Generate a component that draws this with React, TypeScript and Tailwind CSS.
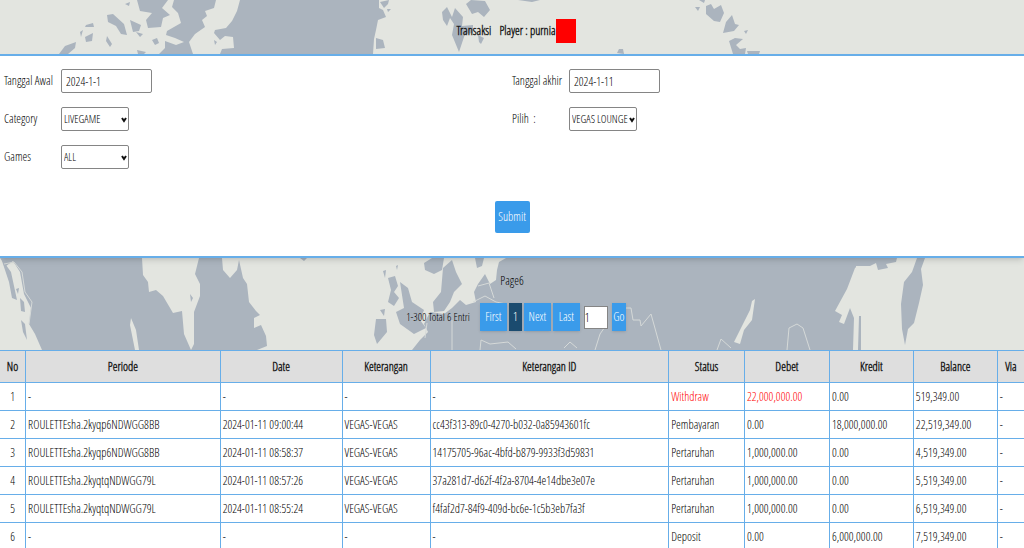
import type { ReactNode } from "react";

// ---------------------------------------------------------------------------
// Data
// ---------------------------------------------------------------------------

interface Transaction {
  periode: string;
  date: string;
  keterangan: string;
  keteranganId: string;
  status: string;
  debet: string;
  kredit: string;
  balance: string;
  via: string;
}

const TRANSACTIONS: Transaction[] = [
  { periode: "-", date: "-", keterangan: "-", keteranganId: "-", status: "Withdraw", debet: "22,000,000.00", kredit: "0.00", balance: "519,349.00", via: "-" },
  { periode: "ROULETTEsha.2kyqp6NDWGG8BB", date: "2024-01-11 09:00:44", keterangan: "VEGAS-VEGAS", keteranganId: "cc43f313-89c0-4270-b032-0a85943601fc", status: "Pembayaran", debet: "0.00", kredit: "18,000,000.00", balance: "22,519,349.00", via: "-" },
  { periode: "ROULETTEsha.2kyqp6NDWGG8BB", date: "2024-01-11 08:58:37", keterangan: "VEGAS-VEGAS", keteranganId: "14175705-96ac-4bfd-b879-9933f3d59831", status: "Pertaruhan", debet: "1,000,000.00", kredit: "0.00", balance: "4,519,349.00", via: "-" },
  { periode: "ROULETTEsha.2kyqtqNDWGG79L", date: "2024-01-11 08:57:26", keterangan: "VEGAS-VEGAS", keteranganId: "37a281d7-d62f-4f2a-8704-4e14dbe3e07e", status: "Pertaruhan", debet: "1,000,000.00", kredit: "0.00", balance: "5,519,349.00", via: "-" },
  { periode: "ROULETTEsha.2kyqtqNDWGG79L", date: "2024-01-11 08:55:24", keterangan: "VEGAS-VEGAS", keteranganId: "f4faf2d7-84f9-409d-bc6e-1c5b3eb7fa3f", status: "Pertaruhan", debet: "1,000,000.00", kredit: "0.00", balance: "6,519,349.00", via: "-" },
  { periode: "-", date: "-", keterangan: "-", keteranganId: "-", status: "Deposit", debet: "0.00", kredit: "6,000,000.00", balance: "7,519,349.00", via: "-" },
];

const COLUMNS: { label: string; width: string }[] = [
  { label: "No", width: "w-[2.5%]" },
  { label: "Periode", width: "w-[19%]" },
  { label: "Date", width: "w-[11.9%]" },
  { label: "Keterangan", width: "w-[8.6%]" },
  { label: "Keterangan ID", width: "w-[23.3%]" },
  { label: "Status", width: "w-[7.4%]" },
  { label: "Debet", width: "w-[8.3%]" },
  { label: "Kredit", width: "w-[8.2%]" },
  { label: "Balance", width: "w-[8.2%]" },
  { label: "Via", width: "w-[2.6%]" },
];

// ---------------------------------------------------------------------------
// Map artwork
// ---------------------------------------------------------------------------

function HeaderMap() {
  return (
    <svg className="absolute inset-0 h-full w-full" viewBox="0 0 1024 54" preserveAspectRatio="none" fill="#abb4be" aria-hidden="true">
      <path d="M59 54 65 46 76 42 75 48 68 54ZM80 32 83 30 81 37ZM86 25 93 23 94 27 85 27ZM85 37 93 33 92 41 86 42ZM107 15 113 14 124 24 127 35 121 34 116 26 108 22ZM107 36 112 44 110 47 106 41ZM125 4 130 2 129 6ZM130 20 141 25 139 31 133 32ZM137 0 168 0 162 8 170 15 163 18 161 27 148 28 146 20 152 13 140 11ZM136 32 143 34 140 37ZM152 40 157 38 159 43 155 45ZM137 50 146 52 144 54 138 54Z" />
      <path d="M174 0H216L214 8 205 11 207 16 202 20 205 27 195 34 189 42 193 54H159L165 48 165 41 176 45 184 42 175 38 166 35 167 31 181 23 178 13 172 7Z" />
      <path d="M240 0H379L379 8 383 10 386 17 378 20 376 30 374 39 373 54H220L222 49 234 48 233 37 225 36 220 40 214 33 215 30 226 28 232 21 237 11ZM376 38 383 40 385 48 376 49ZM380 2 389 0 388 4 384 8ZM387 9 391 9 388 12ZM214 40 217 42 215 45Z" />
      <path d="M442 12 447 7 452 17 455 8 463 17 462 26 473 25 473 33 465 34 459 52 452 35 454 24 450 18 447 26 443 20ZM466 4 471 0 485 1 490 10 484 17 478 12 472 14ZM478 35 484 38 481 44 479 42ZM518 0 540 0 532 2ZM617 53 619 49 623 49 624 54ZM695 7 700 7 698 11ZM699 0 705 0 704 3ZM706 6 711 4 714 9 721 5 724 13 720 22 714 21 706 14ZM732 15 735 24 739 25 734 31 723 33 726 22ZM744 31 748 30 746 34ZM729 41 735 38 743 39 736 45 740 49 746 48 745 54 733 54ZM747 51 760 51 759 54 748 54Z" />
    </svg>
  );
}

function PagerMap() {
  return (
    <svg className="absolute inset-0 h-full w-full" viewBox="0 0 1024 92" preserveAspectRatio="none" aria-hidden="true">
      <g fill="#abb4be">
        {/* North America */}
        <path d="M0 0H142L143 17 148 24 149 34 156 32 163 38 173 55 182 53 184 76 191 92 194 86 194 54 200 38 200 26 195 16 199 0H222L223 12 230 20 237 12 239 2 243 20 247 26 249 44 256 53 260 57 254 60 254 70 261 67 266 78 267 88 257 92H42L35 76 29 66 31 50 24 36 20 14 13 3 6 8Z" />
        <path d="M1 0 11 14 14 28 17 42 12 40 9 24 5 12ZM16 31 19 30 18 36ZM20 40 24 44 25 54 21 53ZM21 62 25 66 27 82 23 74ZM300 0H307L304 3Z" />
        {/* Europe and Asia */}
        <path d="M383 13 386 12 385 20ZM396 8 398 7 397 12ZM388 20 395 18 398 28 394 34 399 40 394 48 388 44 391 32ZM380 52 385 51 384 58ZM376 61 386 61 387 74 377 86 374 77ZM424 5 432 0H444L442 12 434 16 425 12Z" />
        <path d="M443 10 452 2 456 14 462 26 454 34 450 44 444 53 434 54 433 44 441 34ZM400 24 408 30 412 44 424 52 420 62 426 70 414 76 400 66 396 54 404 50ZM475 0H484L482 8 477 10Z" />
        <path d="M506 0 499 4 497 12 496 22 490 26 485 16 478 26 474 34 476 44 466 47 460 42 452 50 444 56 430 54 424 66 428 74 420 82 412 92H856V0Z" />
      </g>
      <g fill="#e3e5e0">
        <path d="M131 60 136 72 139 92H135L130 67ZM752 43 755 41 752 62 744 72 740 86 734 84 745 62 750 52Z" />
        <path d="M860 6 870 8 876 4 890 6 896 0H1024V92H853L854 60 850 50 844 66 839 64 842 57 835 53 847 31 855 10Z" />
      </g>
      <path d="M856 0H897L896 4 886 6 888 10 878 12 876 5 870 8 856 8ZM917 0H925L921 11 923 27 919 45 914 65 908 71 905 87 902 71 901 46 904 24 912 14ZM859 58H861V92H858ZM190 36 193 40 191 44Z" fill="#abb4be" />
      <path
        d="M4 6 14 4 22 14 25 34 32 44 29 66M473 44 485 38 496 44 506 46M478 28 489 25 494 40M480 92 481 82 490 86 508 84 516 91M564 90 570 84 577 90M595 92 600 76 607 66 605 58M622 50 631 50 633 62 640 62 641 68 651 56 656 74 661 92M717 92 721 81 731 90M787 92 789 70 797 66 803 70 810 92M452 62 452 92M427 65 425 80"
        fill="none"
        stroke="#d5d9d8"
      />
    </svg>
  );
}

// ---------------------------------------------------------------------------
// Controls
// ---------------------------------------------------------------------------

function Field({ id, label, children }: { id: string; label: string; children: ReactNode }) {
  return (
    <div className="flex h-[38px] items-start">
      <label htmlFor={id} className="w-[57px] shrink-0 pt-1 whitespace-pre">{label}</label>
      {children}
    </div>
  );
}

function Select({ id, value }: { id: string; value: string }) {
  return (
    <div className="relative w-[68px]">
      <select id={id} className="h-6 w-full appearance-none rounded-xs border border-[#858585] bg-white px-0.5 text-[11px] text-black" defaultValue={value}>
        <option>{value}</option>
      </select>
      <svg className="pointer-events-none absolute top-[10px] right-0.5 h-1.5 w-1.5" viewBox="0 0 6 6" fill="none" stroke="#111" strokeWidth="2" aria-hidden="true">
        <path d="M1 1 3 4 5 1" />
      </svg>
    </div>
  );
}

function DateInput({ id, value }: { id: string; value: string }) {
  return <input id={id} type="text" defaultValue={value} className="h-6 w-[91px] rounded-xs border border-[#858585] bg-white px-1 text-black" />;
}

function PageButton({ label, width, active }: { label: string; width: string; active?: boolean }) {
  return (
    <button type="button" className={`h-7 text-white shadow-sm ${width} ${active ? "bg-[#1b4b6f]" : "bg-[#3a9bea]"}`}>
      {label}
    </button>
  );
}

// ---------------------------------------------------------------------------
// Page
// ---------------------------------------------------------------------------

export default function App() {
  return (
    <main className="min-h-screen bg-white font-['Open_Sans_Condensed_Light','Open_Sans',sans-serif] text-xs text-black">
      <header className="relative flex h-[54px] items-center justify-center bg-[#e3e5e0] pt-2 pl-2">
        <HeaderMap />
        <h1 className="relative flex h-6 items-center gap-2 font-bold text-[#222]">
          <span>Transaksi</span>
          <span className="flex items-center">Player : purnia<span className="h-6 w-5 bg-[#ff0000]" /></span>
        </h1>
      </header>

      <form className="relative z-10 border-y-2 border-[#67aee9] bg-white px-1 pt-[13px] shadow-md" onSubmit={(e) => e.preventDefault()}>
        <div className="grid grid-cols-2">
          <Field id="start" label="Tanggal Awal"><DateInput id="start" value="2024-1-1" /></Field>
          <Field id="end" label="Tanggal akhir"><DateInput id="end" value="2024-1-11" /></Field>
          <Field id="category" label="Category"><Select id="category" value="LIVEGAME" /></Field>
          <Field id="pilih" label="Pilih  :"><Select id="pilih" value="VEGAS LOUNGE" /></Field>
          <Field id="games" label="Games"><Select id="games" value="ALL" /></Field>
        </div>
        <div className="flex justify-center pt-[18px] pb-[23px]">
          <button type="submit" className="h-8 w-[35px] rounded-xs bg-[#3a9bea] text-white">Submit</button>
        </div>
      </form>

      <section className="relative h-[92px] bg-[#e3e5e0] pt-[15px]">
        <PagerMap />
        <div className="relative text-center">Page6</div>
        <nav className="relative flex items-center justify-center pt-[14px] pl-2" aria-label="Pagination">
          <span className="mr-[10px] text-[11px]">1-300 Total 6 Entri</span>
          <div className="flex items-center gap-0.5">
            <PageButton label="First" width="w-[27px]" />
            <PageButton label="1" width="w-[13px]" active />
            <PageButton label="Next" width="w-[27px]" />
            <PageButton label="Last" width="w-[27px]" />
          </div>
          <input aria-label="Page number" defaultValue="1" className="mx-1 h-[23px] w-6 border border-[#858585] bg-white text-black" />
          <PageButton label="Go" width="w-[14px]" />
        </nav>
      </section>

      <table className="w-full table-fixed border-collapse">
        <thead className="text-[#222]">
          <tr className="h-8 bg-[#dedede]">
            {COLUMNS.map((col) => (
              <th key={col.label} className={`border border-[#67aee9] font-bold first:border-l-0 last:border-r-0 ${col.width}`}>{col.label}</th>
            ))}
          </tr>
        </thead>
        <tbody>
          {TRANSACTIONS.map((row, i) => (
            <tr key={i} className="h-7">
              <td className="border border-l-0 border-[#67aee9] text-center">{i + 1}</td>
              {Object.entries(row).map(([key, value]) => {
                const red = row.status === "Withdraw" && (key === "status" || key === "debet");
                return (
                  <td key={key} className={`border border-[#67aee9] px-0.5 last:border-r-0 ${red ? "text-[#ff0000]" : ""}`}>
                    {value}
                  </td>
                );
              })}
            </tr>
          ))}
        </tbody>
      </table>
    </main>
  );
}
